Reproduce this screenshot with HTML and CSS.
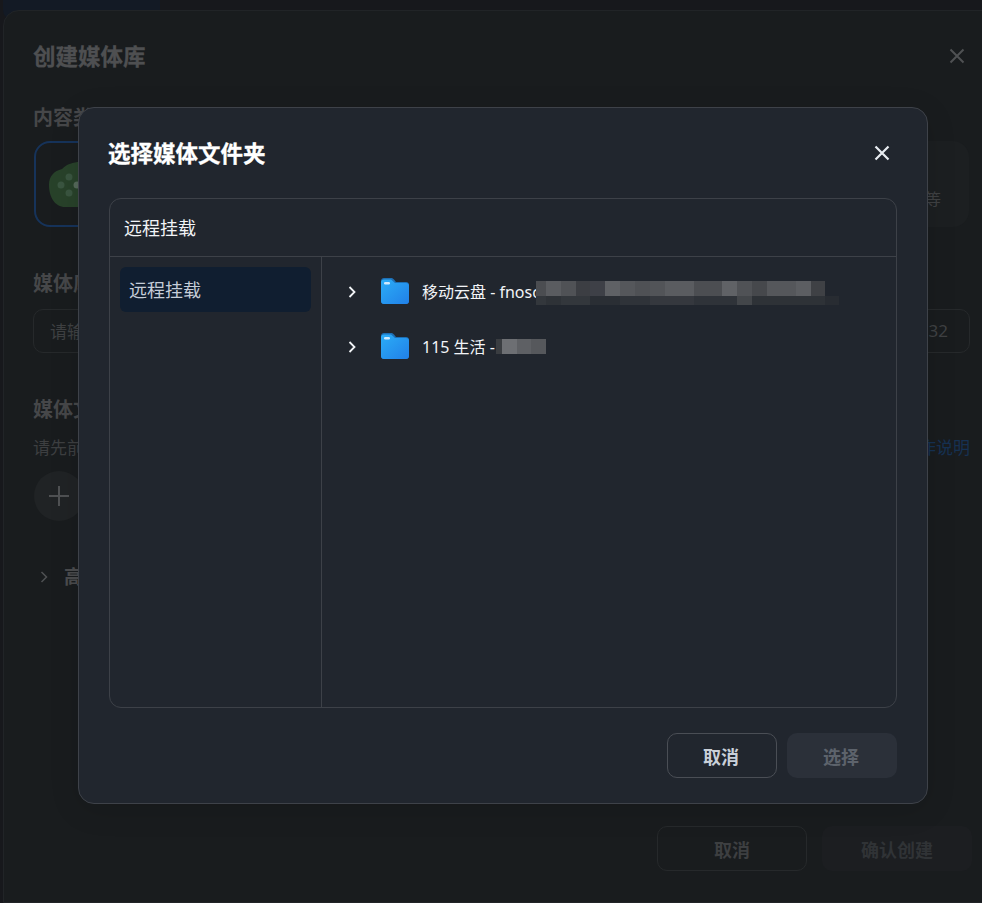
FILE: index.html
```html
<!DOCTYPE html>
<html lang="zh-CN">
<head>
<meta charset="utf-8">
<title>选择媒体文件夹</title>
<link rel="stylesheet" href="styles.css">
</head>
<body>
<div class="tab-peek"></div>
<section class="base">
  <header class="base-head">
    <h2 class="base-title">创建媒体库</h2>
    <svg class="base-close" viewBox="0 0 16 16"><path d="M1.5 1.5l13 13M14.5 1.5l-13 13"/></svg>
  </header>
  <div class="label first">内容类型</div>
  <div class="cards">
    <div class="card selected">
      <svg class="blob" viewBox="0 0 60 46">
        <path d="M0 24C0 15 5 10 13 8 18 3 24 1 31 1c10 0 17 4 22 10 5 5 7 11 7 17 0 11-8 18-22 18H16C6 46 0 36 0 24z" fill="#28422a"/>
        <circle cx="20" cy="16" r="3.500" fill="#3a5540"/>
        <circle cx="12" cy="24" r="3.500" fill="#3a5540"/>
        <circle cx="20" cy="32" r="3.500" fill="#3a5540"/>
        <circle cx="28" cy="24" r="3.500" fill="#55695a"/>
      </svg>
    </div>
    <div class="card other"><span class="card-text">等</span></div>
  </div>
  <div class="label name">媒体库名称</div>
  <div class="input"><span class="input-text">请输入</span><span class="input-text">32</span></div>
  <div class="label folder">媒体文件夹</div>
  <div class="hint"><span>请先前往</span><span class="hint-link">操作说明</span></div>
  <div class="add">
    <svg viewBox="0 0 20 20"><path d="M10 0v20M0 10h20"/></svg>
  </div>
  <div class="advanced">
    <svg viewBox="0 0 8 12"><path d="M1.5 1l5 5-5 5"/></svg>
    <span>高级设置</span>
  </div>
  <footer class="base-foot">
    <div class="base-btn outline">取消</div>
    <div class="base-btn filled">确认创建</div>
  </footer>
</section>

<div class="overlay">
  <section class="modal">
    <header class="modal-head">
      <h1 class="modal-title">选择媒体文件夹</h1>
      <svg class="modal-close" viewBox="0 0 16 16"><path d="M1.5 1.5l13 13M14.5 1.5l-13 13"/></svg>
    </header>
    <div class="browser">
      <div class="crumb">远程挂载</div>
      <div class="panes">
        <nav class="side"><div class="side-item">远程挂载</div></nav>
        <div class="tree">
          <div class="row">
            <svg class="chev" viewBox="0 0 8 12"><path d="M1.5 1l5 5-5 5"/></svg>
            <svg class="folder-icon" viewBox="0 0 28 26">
              <defs><linearGradient id="fa" x1="0" y1="0" x2="1" y2="1"><stop offset="0" stop-color="#2badf6"/><stop offset="1" stop-color="#2180e8"/></linearGradient></defs>
              <path d="M3 0h7c1.500 0 2.200.6 3 1.500L15 4h10c1.700 0 3 1.300 3 3v16c0 1.700-1.300 3-3 3H3c-1.700 0-3-1.300-3-3V3c0-1.700 1.300-3 3-3z" fill="#1d6fb5"/>
              <path d="M3 1.500h7l4 3.500h11c1.700 0 3 .8 3 2.500V23c0 1.700-1.300 3-3 3H3c-1.700 0-3-1.300-3-3V4c0-1.500 1.300-2.500 3-2.500z" fill="url(#fa)"/>
              <rect x="3" y="4" width="6" height="2.500" rx="1.200" fill="#cfeafd"/>
            </svg>
            <span class="row-text">移动云盘 - fnosc</span>
            <div class="mosaic mosaic-a"></div>
          </div>
          <div class="row">
            <svg class="chev" viewBox="0 0 8 12"><path d="M1.5 1l5 5-5 5"/></svg>
            <svg class="folder-icon" viewBox="0 0 28 26">
              <path d="M3 0h7c1.500 0 2.200.6 3 1.500L15 4h10c1.700 0 3 1.300 3 3v16c0 1.700-1.300 3-3 3H3c-1.700 0-3-1.300-3-3V3c0-1.700 1.300-3 3-3z" fill="#1d6fb5"/>
              <path d="M3 1.500h7l4 3.500h11c1.700 0 3 .8 3 2.500V23c0 1.700-1.300 3-3 3H3c-1.700 0-3-1.300-3-3V4c0-1.500 1.300-2.500 3-2.500z" fill="url(#fa)"/>
              <rect x="3" y="4" width="6" height="2.500" rx="1.200" fill="#cfeafd"/>
            </svg>
            <span class="row-text">115 生活 -</span>
            <div class="mosaic mosaic-b"></div>
          </div>
        </div>
      </div>
    </div>
    <footer class="modal-foot">
      <div class="btn btn-cancel">取消</div>
      <div class="btn btn-select">选择</div>
    </footer>
  </section>
</div>
</body>
</html>
```
FILE: styles.css
```css
* { box-sizing: border-box; }
html, body { margin: 0; height: 903px; overflow: hidden; }
body {
  background: #17181c;
  font-family: "Noto Sans", "Noto Sans CJK SC", sans-serif;
  padding: 10px 0 0 3px;
  position: relative;
}
h1, h2 { margin: 0; }

.tab-peek {
  position: absolute; left: 3px; top: -20px; width: 157px; height: 40px;
  background: #131a25; border-radius: 10px;
}
.base {
  position: relative;
  width: 1000px; height: 893px;
  background: #191c1e;
  border: 1px solid #212427;
  border-radius: 16px 0 0 0;
  padding: 0 0 0 29px;
  display: flex; flex-direction: column; align-items: flex-start;
  color: #4b4c4e;
}
.base-head { display: flex; align-items: center; justify-content: space-between; width: 932px; height: 93px; padding-bottom: 2px; flex: none; }
.base-title { font-size: 22.500px; line-height: 30px; font-weight: 700; color: #4e4f51; -webkit-text-stroke: .3px #4e4f51; }
.base-close { width: 16px; height: 16px; fill: none; stroke: #4f5153; stroke-width: 2; margin-top: -1px; }
.label { font-size: 20px; font-weight: 700; line-height: 28px; color: #464749; }
.cards { display: flex; gap: 20px; margin-top: 9px; }
.card { width: 300px; height: 86px; border-radius: 16px; }
.card.selected { width: 300px; border: 2px solid #16335a; padding: 18px 0 0 13px; margin-left: 1px; }
.blob { width: 60px; height: 46px; display: block; }
.card.other { width: 614px; background: #1c1f21; margin-left: 1px; display: flex; justify-content: flex-end; align-items: center; padding: 0 28px 0 0; color: #3f4143; font-size: 16px; }
.card-text { margin-top: 28px; }
.label.name { margin-top: 43px; }
.input {
  width: 937px; height: 44px; margin-top: 11px;
  border: 1px solid #26292b; border-radius: 10px;
  display: flex; justify-content: space-between; align-items: center;
  padding: 0 21px 0 16px; font-size: 17px; color: #3f4143;
}
.input-text { margin-top: -2px; }
.label.folder { margin-top: 43px; }
.hint { width: 937px; margin-top: 12px; display: flex; justify-content: space-between; font-size: 17px; line-height: 24px; color: #3d3f41; }
.hint-link { color: #163152; }
.add {
  width: 50px; height: 50px; margin: 11px 0 0 1px;
  border-radius: 50%; background: #202325;
  display: flex; align-items: center; justify-content: center;
}
.add svg { width: 20px; height: 20px; fill: none; stroke: #4f5153; stroke-width: 2; }
.advanced { display: flex; align-items: center; gap: 16px; margin: 42px 0 0 7px; font-size: 19px; font-weight: 700; line-height: 28px; color: #4b4c4e; }
.advanced svg { width: 8px; height: 12px; fill: none; stroke: #4f5153; stroke-width: 1.500; }
.base-foot { display: flex; gap: 15px; margin: 235px 0 0 624px; }
.base-btn {
  width: 150px; height: 45px; border-radius: 10px;
  display: flex; align-items: center; justify-content: center;
  font-size: 18px; font-weight: 700;
}
.base-btn.outline { border: 1px solid #26292b; color: #3d3f41; }
.base-btn.filled { background: #1c1e21; color: #303336; }

.overlay { position: absolute; inset: 0; }
.modal {
  position: absolute; left: 78px; top: 107px; width: 850px; height: 697px;
  background: #21262e;
  border: 1px solid #3e4249;
  border-radius: 16px;
  box-shadow: 0 6px 30px rgba(0,0,0,.12);
  padding: 0 30px;
  display: flex; flex-direction: column;
  color: #fff;
}
.modal-head { height: 90px; display: flex; align-items: center; justify-content: space-between; flex: none; }
.modal-title { font-size: 22.500px; line-height: 30px; font-weight: 700; color: #fff; margin: 2px 0 0 -1px; -webkit-text-stroke: .3px #fff; }
.modal-close { width: 16px; height: 16px; margin-right: 7px; fill: none; stroke: #e8ecf1; stroke-width: 2.200; }
.browser {
  width: 788px; height: 510px; flex: none;
  border: 1px solid #3d4148; border-radius: 12px;
  display: flex; flex-direction: column;
}
.crumb { height: 58px; flex: none; border-bottom: 1px solid #3d4148; display: flex; align-items: center; padding: 0 0 2px 14px; font-size: 18px; color: #f2f4f7; }
.panes { flex: 1; display: flex; min-height: 0; }
.side { width: 212px; flex: none; border-right: 1px solid #3d4148; padding: 10px; }
.side-item {
  height: 45px; border-radius: 6px; background: #101e30;
  display: flex; align-items: center; padding: 0 0 2px 9px;
  font-size: 18px; color: #c5cdd8;
}
.tree { flex: 1; padding: 7px 0 0 26px; }
.row { height: 55px; display: flex; align-items: center; position: relative; font-size: 16px; color: #f2f4f7; }
.chev { width: 8px; height: 12px; flex: none; fill: none; stroke: #f2f4f7; stroke-width: 1.800; }
.folder-icon { width: 28px; height: 26px; flex: none; margin: -1px 0 0 25px; }
.row-text { margin: -2px 0 0 13px; white-space: nowrap; }
.mosaic { position: absolute; }
.mosaic-a {
  left: 188px; top: 17px; width: 303px; height: 24px;
  background:
    linear-gradient(90deg, #4b4d51 0 10px, #5a5c60 10px 25px, #505256 25px 40px, #3c3e43 40px 54px, #3e4047 54px 69px, #5f6165 69px 84px, #55575b 84px 99px, #4f5155 99px 114px, #525458 114px 129px, #5a5c60 129px 158px, #4c4e52 158px 186px, #606266 186px 201px, #505256 201px 216px, #46484c 216px 231px, #55575b 231px 260px, #5c5e62 260px 275px, #3f4145 275px 289px, transparent 289px) top / 100% 15px no-repeat,
    linear-gradient(90deg, #33373c 0 10px, #2e3237 10px 25px, #33373c 25px 54px, #2a2e34 54px 84px, #2f3339 84px 114px, #35383e 114px 158px, #2f3339 158px 201px, #43464a 201px 216px, #2e3237 216px 289px, #282c32 289px 303px) bottom / 100% 9px no-repeat;
}
.mosaic-b {
  left: 148px; top: 20px; width: 50px; height: 15px;
  background: linear-gradient(90deg, #3a3d41 0 6px, #6d6f73 6px 21px, #5e6064 21px 35px, #56585c 35px 50px);
}

.modal-foot { display: flex; justify-content: flex-end; gap: 10px; margin-top: 25px; }
.btn {
  width: 110px; height: 45px; border-radius: 10px;
  display: flex; align-items: center; justify-content: center;
  padding-right: 2px;
  font-size: 18px; font-weight: 700;
}
.btn-cancel { border: 1px solid #4a4e55; color: #c9d0d9; }
.btn-select { background: #2b3039; color: #5d636c; }
```
